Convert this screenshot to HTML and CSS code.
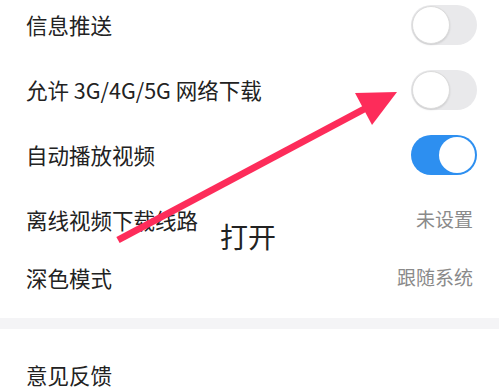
FILE: index.html
```html
<!DOCTYPE html>
<html lang="zh-CN">
<head>
<meta charset="utf-8">
<title>设置</title>
<link rel="stylesheet" href="styles.css">
</head>
<body>
<div class="page">
  <section class="group first">
    <div class="row"><span class="label">信息推送</span><span class="switch"><span class="knob"></span></span></div>
    <div class="row"><span class="label">允许 3G/4G/5G 网络下载</span><span class="switch"><span class="knob"></span></span></div>
    <div class="row"><span class="label">自动播放视频</span><span class="switch on"><span class="knob"></span></span></div>
    <div class="row"><span class="label">离线视频下载线路</span><span class="value">未设置</span></div>
    <div class="row short"><span class="label">深色模式</span><span class="value">跟随系统</span></div>
  </section>
  <div class="band"></div>
  <section class="group last">
    <div class="row"><span class="label">意见反馈</span></div>
  </section>

  <svg class="arrow" width="499" height="387" viewBox="0 0 499 387">
    <line x1="118" y1="240" x2="368" y2="107" stroke="#fd2c5a" stroke-width="7"/>
    <polygon points="355,93 397,92 372,125" fill="#fd2c5a"/>
  </svg>
  <div class="note">打开</div>
</div>
</body>
</html>
```
FILE: styles.css
```css
html, body {
  margin: 0;
  padding: 0;
  background: #ffffff;
}
body {
  font-family: "Noto Sans CJK SC", "Noto Sans", sans-serif;
  color: #222222;
  overflow: hidden;
}
.page {
  position: relative;
  width: 499px;
  height: 387px;
  overflow: hidden;
}
.group.first {
  margin-top: -8px;
}
.row {
  display: flex;
  align-items: center;
  justify-content: space-between;
  height: 65px;
  padding: 0 22px 0 26px;
}
.row.short {
  height: 51px;
}
.label {
  font-size: 21.5px;
  line-height: 1.2;
  color: #222222;
}
.value {
  font-size: 19px;
  line-height: 1.2;
  color: #8a8a8a;
  margin-right: 4px;
}
.band {
  margin-top: 15px;
  height: 11px;
  background: #f4f4f6;
}
.group.last .row {
  height: auto;
  margin-top: 35px;
}
.group.last .label {
  line-height: 1;
}
.switch {
  position: relative;
  display: flex;
  align-items: center;
  width: 66px;
  height: 40px;
  border-radius: 20px;
  background: #e9e9eb;
  box-sizing: border-box;
}
.switch .knob {
  width: 38px;
  height: 38px;
  margin-left: 1px;
  border-radius: 50%;
  background: #ffffff;
  box-sizing: border-box;
  border: 1px solid #dcdcdc;
  box-shadow: 0 1px 2px rgba(0,0,0,0.12);
}
.switch.on {
  background: #2d8ff0;
  justify-content: flex-end;
}
.switch.on .knob {
  margin-left: 0;
  margin-right: 2px;
  width: 36px;
  height: 36px;
  border: none;
  box-shadow: none;
}
.arrow {
  position: absolute;
  left: 0;
  top: 0;
}
.note {
  position: absolute;
  left: 220px;
  top: 221px;
  font-size: 28px;
  line-height: 1.1;
  color: #222222;
}
```
